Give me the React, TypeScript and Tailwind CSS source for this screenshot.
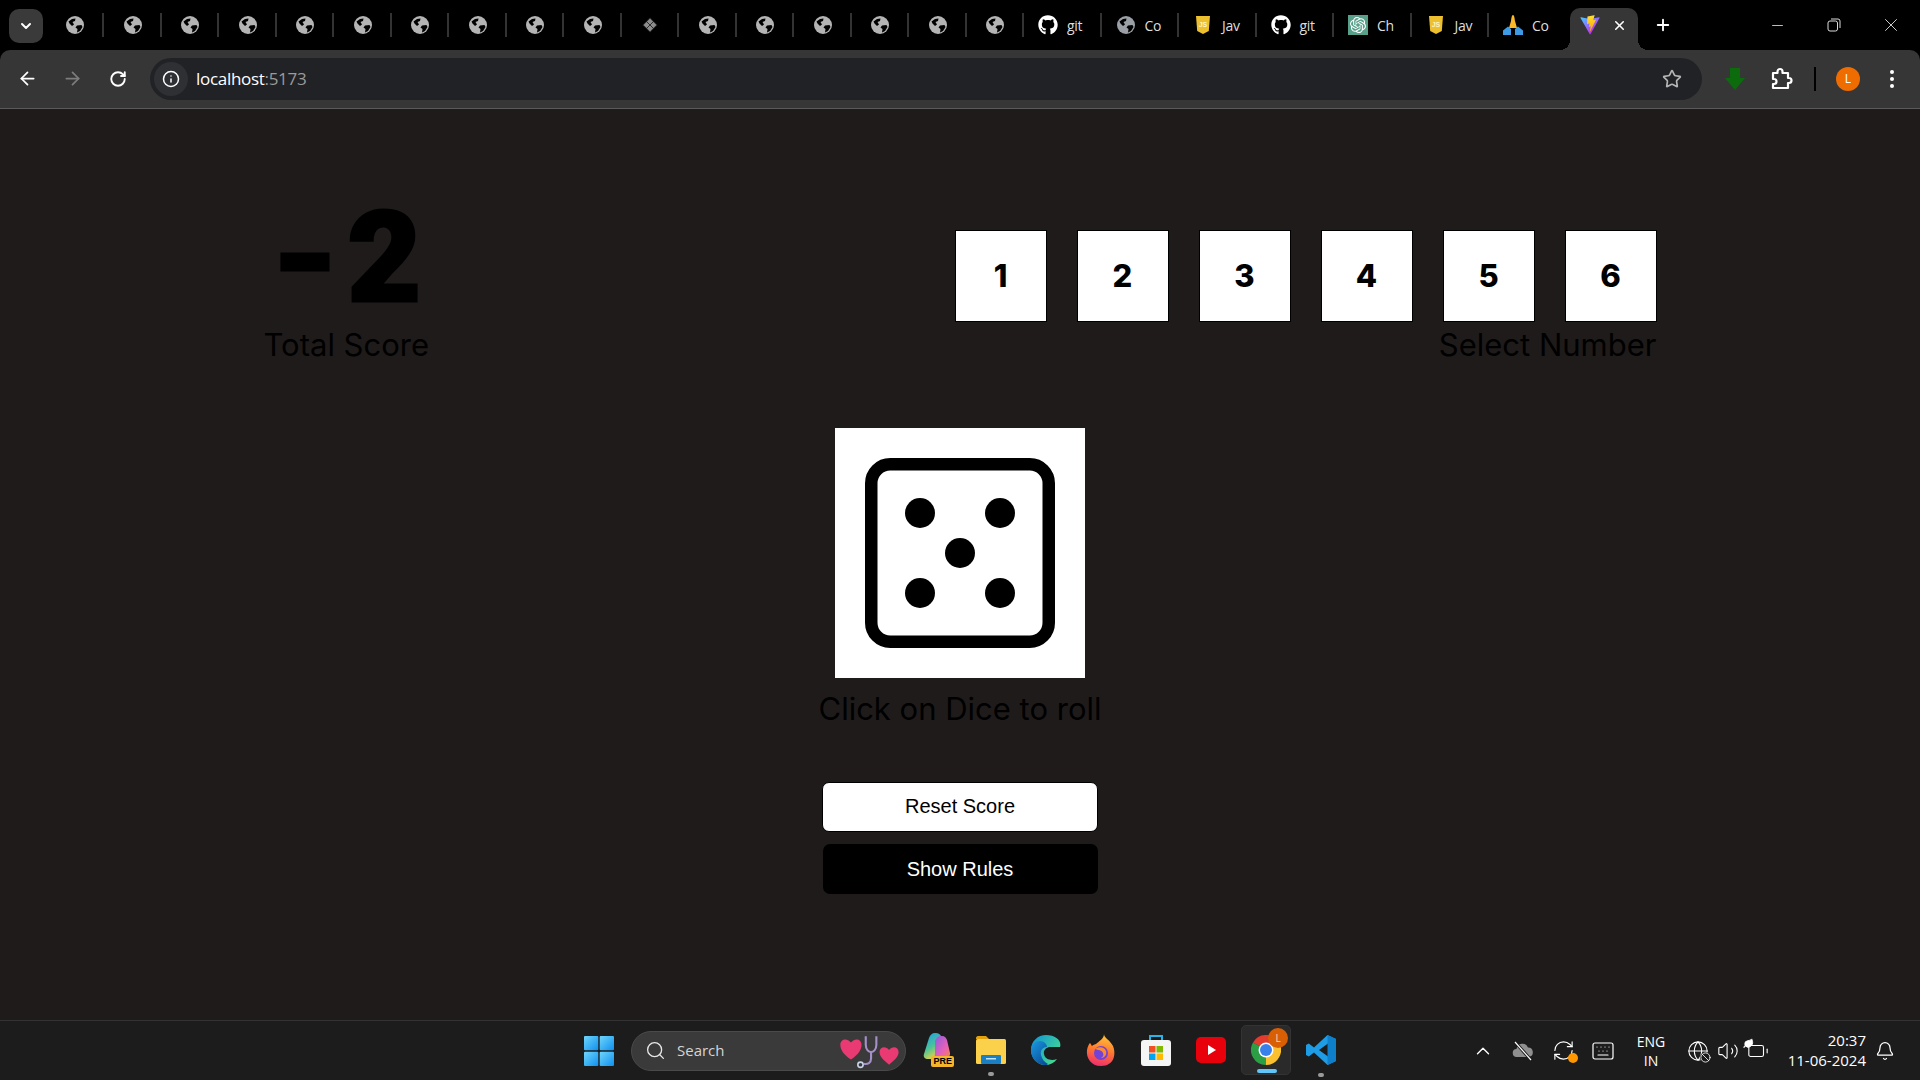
import React from "react";
import { ArrowLeft, ArrowRight, RotateCw, Info, Star, ChevronDown, X, Plus, Minus, ChevronUp, RefreshCw, Keyboard, Globe, Volume2, Bell, Search, Battery, Leaf, Ban } from "lucide-react";
import { FaGithub } from "react-icons/fa";
import { SiOpenai } from "react-icons/si";

const GlobeFav = ({ color = "#b4b4b4" }: { color?: string }) => (
  <svg width="18" height="18" viewBox="0 0 18 18">
    <circle cx="9" cy="9" r="9" fill={color} />
    <path d="M2.500 5.500 6 3l3.500-.5-.5 2.500-2.500 1L8 8.500 6 10 3.500 7.500z M11 9.500l4.500-.5 1 2-2.500 4-3 1.500.5-3.500-2-1.500z" fill="#000" />
  </svg>
);

const Diamond = () => (
  <svg width="16" height="16" viewBox="0 0 14 14">
    <rect x="2.500" y="2.500" width="9" height="9" transform="rotate(45 7 7)" fill="#8d8d8d" />
    <path d="M7 1 13 7M4 4l6 6M1 7l6 6M7 1 1 7M10 4l-6 6M13 7l-6 6" stroke="#000" strokeWidth="0.600" />
  </svg>
);

const JsFav = () => (
  <svg width="14" height="18" viewBox="0 0 14 18">
    <path d="M0 0h14l-1.200 15L7 18l-5.800-3z" fill="#ecc02e" />
    <text x="7" y="11" textAnchor="middle" fontSize="7" fontWeight="700" fontFamily="Liberation Sans" fill="#fff4c0">JS</text>
  </svg>
);

const ChatFav = () => (
  <span className="flex h-[20px] w-[20px] items-center justify-center bg-[#58a08a]">
    <SiOpenai size={16} color="#ffffff" />
  </span>
);

const PrayFav = () => (
  <svg width="20" height="20" viewBox="0 0 20 20">
    <path d="M10 0c1.200 0 1.600 3 2 6l2 7H6l2-7c.4-3 .8-6 2-6z" fill="#fbb829" />
    <path d="M0 20v-4.500L5 11.500 8 14v6zM20 20v-4.500L15 11.500 12 14v6z" fill="#3d9be5" />
  </svg>
);

const Vite = () => (
  <svg width="20" height="20" viewBox="0 0 410 404">
    <defs>
      <linearGradient id="va" x1="6" y1="33" x2="235" y2="344" gradientUnits="userSpaceOnUse">
        <stop stopColor="#41D1FF" />
        <stop offset="1" stopColor="#BD34FE" />
      </linearGradient>
      <linearGradient id="vb" x1="194" y1="8" x2="236" y2="293" gradientUnits="userSpaceOnUse">
        <stop stopColor="#FFEA83" />
        <stop offset="0.08" stopColor="#FFDD35" />
        <stop offset="1" stopColor="#FFA800" />
      </linearGradient>
    </defs>
    <path d="M399.641 59.5246L215.643 388.545C211.844 395.338 202.084 395.378 198.228 388.618L10.5817 59.5563C6.38087 52.1896 12.6802 43.2665 21.0281 44.7586L205.223 77.6824C206.398 77.8924 207.601 77.8904 208.776 77.6763L389.119 44.8058C397.439 43.2894 403.768 52.1434 399.641 59.5246Z" fill="url(#va)" />
    <path d="M292.965 1.5744L156.801 28.2552C154.563 28.6937 152.906 30.5903 152.771 32.8664L144.395 174.33C144.198 177.662 147.258 180.248 150.51 179.498L188.42 170.749C191.967 169.931 195.172 173.055 194.443 176.622L183.18 231.775C182.422 235.487 185.907 238.661 189.532 237.56L212.947 230.446C216.577 229.344 220.065 232.527 219.297 236.242L201.398 322.875C200.278 328.294 207.486 331.249 210.492 326.603L212.5 323.5L323.454 102.072C325.312 98.3645 322.108 94.137 318.036 94.9228L279.014 102.454C275.347 103.161 272.227 99.746 273.262 96.1583L298.731 7.86689C299.767 4.27314 296.636 0.855181 292.965 1.5744Z" fill="url(#vb)" />
  </svg>
);

const smallTabs = Array.from({ length: 17 }, (_, i) => i);

const wideTabs: { icon: React.ReactNode; label: string }[] = [
  { icon: <FaGithub size={20} color="#ffffff" />, label: "git" },
  { icon: <GlobeFav color="#9aa0a6" />, label: "Co" },
  { icon: <JsFav />, label: "Jav" },
  { icon: <FaGithub size={20} color="#ffffff" />, label: "git" },
  { icon: <ChatFav />, label: "Ch" },
  { icon: <JsFav />, label: "Jav" },
  { icon: <PrayFav />, label: "Co" },
];

const TabStrip = () => (
  <div className="relative flex h-[50px] items-center bg-black">
    <div className="absolute left-[9px] top-[9px] flex h-[34px] w-[34px] items-center justify-center rounded-[10px] bg-[#3a3a3a]">
      <ChevronDown size={16} color="#ffffff" strokeWidth={3} />
    </div>
    <div className="flex h-full items-center pl-[46.500px]">
      {smallTabs.map((i) => (
        <div key={i} className="flex h-[24px] w-[57.500px] items-center border-r-2 border-[#333333] pl-[2px]">
          <div className="flex w-full items-center justify-center">{i === 10 ? <Diamond /> : <GlobeFav />}</div>
        </div>
      ))}
      {wideTabs.map((t, i) => (
        <div key={i} className={`flex h-[24px] w-[77.500px] items-center pl-[14px] ${i < 6 ? "border-r-2 border-[#333333]" : ""}`}>
          <span className="flex w-[20px] shrink-0 justify-center">{t.icon}</span>
          <span className="ml-[9px] whitespace-nowrap font-['Open_Sans',sans-serif] text-[14px] tracking-[-0.3px] text-[#dedede]">{t.label}</span>
        </div>
      ))}
    </div>
    <div className="relative ml-[3.500px] mt-[8px] flex h-[42px] w-[68px] items-center rounded-t-[10px] bg-[#363636] pb-[8px] pl-[10px]">
      <span className="absolute bottom-0 left-[-10px] h-[10px] w-[10px] bg-[radial-gradient(circle_at_0_0,transparent_10px,#363636_10px)]" />
      <span className="absolute bottom-0 right-[-10px] h-[10px] w-[10px] bg-[radial-gradient(circle_at_100%_0,transparent_10px,#363636_10px)]" />
      <Vite />
      <X size={15} color="#ffffff" strokeWidth={2.500} className="ml-[12px]" />
    </div>
    <Plus size={18} color="#ffffff" strokeWidth={2.500} className="ml-[16px]" />
    <div className="ml-auto flex items-center pr-[1px]">
      <span className="flex w-[56px] justify-center"><Minus size={17} color="#dddddd" strokeWidth={1.200} /></span>
      <span className="flex w-[58px] justify-center">
        <svg width="14" height="14" viewBox="0 0 14 14" fill="none" stroke="#dddddd" strokeWidth="1">
          <rect x="1" y="3" width="9.500" height="10" rx="2" />
          <path d="M4 1h7a2 2 0 0 1 2 2v7" />
        </svg>
      </span>
      <span className="flex w-[56px] justify-center"><X size={22} color="#dddddd" strokeWidth={1} /></span>
    </div>
  </div>
);

const PuzzleIcon = () => (
  <svg width="24" height="24" viewBox="0 0 24 24" fill="none" stroke="#ffffff" strokeWidth="2.200" strokeLinejoin="round">
    <path d="M4 6h4.500V4.500a2.500 2.500 0 0 1 5 0V6H19v5h1a2.500 2.500 0 0 1 0 5h-1v5H4v-4h1a2.500 2.500 0 0 0 0-5H4z" />
  </svg>
);

const Toolbar = () => (
  <div className="flex h-[59px] items-center rounded-t-[10px] border-b border-[#5a5a5a] bg-[#363636] pb-[1px]">
    <span className="flex w-[54px] justify-center"><ArrowLeft size={21} color="#ffffff" strokeWidth={2} /></span>
    <span className="-ml-[4px] flex w-[45px] justify-center"><ArrowRight size={21} color="#7d7d7d" strokeWidth={2} /></span>
    <span className="flex w-[46px] justify-center"><RotateCw size={18} color="#ffffff" strokeWidth={2.500} /></span>
    <div className="ml-[9px] flex h-[42px] w-[1552px] items-center rounded-[21px] bg-[#212226] pl-[4px] pr-[20px]">
      <span className="flex h-[34px] w-[34px] items-center justify-center rounded-full bg-[#2f3034]">
        <Info size={18} color="#ffffff" strokeWidth={2} />
      </span>
      <span className="ml-[8px] font-['Open_Sans',sans-serif] text-[17px] tracking-[-0.3px] text-white">
        localhost<span className="text-[#9a9a9a]">:5173</span>
      </span>
      <Star size={20} color="#b5b5b5" strokeWidth={2} className="ml-auto" />
    </div>
    <span className="ml-[15px] flex w-[36px] justify-center">
      <svg width="20" height="22" viewBox="0 0 20 22"><path d="M5 0h10v10h5L10 22 0 10h5z" fill="#0c6b0c" /></svg>
    </span>
    <span className="ml-[10px] flex w-[36px] justify-center"><PuzzleIcon /></span>
    <span className="ml-[15px] h-[24px] w-[2px] bg-black" />
    <span className="ml-[20px] flex h-[24px] w-[24px] items-center justify-center rounded-full bg-[#ee6c00] font-['Open_Sans',sans-serif] text-[12px] text-white">L</span>
    <span className="ml-[30px] flex flex-col gap-[3px]">
      <i className="h-[4px] w-[4px] rounded-full bg-white" />
      <i className="h-[4px] w-[4px] rounded-full bg-white" />
      <i className="h-[4px] w-[4px] rounded-full bg-white" />
    </span>
  </div>
);

const DiceFace = () => (
  <svg width="250" height="250" viewBox="0 0 250 250" className="block">
    <rect x="36.250" y="36.250" width="177.500" height="177.500" rx="19" fill="none" stroke="#000" strokeWidth="12.500" />
    <circle cx="85" cy="85" r="15" fill="#000" />
    <circle cx="165" cy="85" r="15" fill="#000" />
    <circle cx="125" cy="125" r="15" fill="#000" />
    <circle cx="85" cy="165" r="15" fill="#000" />
    <circle cx="165" cy="165" r="15" fill="#000" />
  </svg>
);

const Game = () => (
  <main className="flex flex-1 flex-col items-center bg-[#1f1b1b] pt-[86px] font-['Inter',sans-serif] text-black">
    <div className="flex w-[1393px] items-end justify-between">
      <div className="flex flex-col items-center">
        <div className="whitespace-nowrap pl-[6px] font-['Roboto',sans-serif] text-[127px] font-black leading-[125px] [-webkit-text-stroke-width:3px]">
          <span className="mr-[13px] inline-block origin-center scale-x-[1.22]">-</span>2
        </div>
        <div className="mt-[2px] text-[31px] leading-[45px]">Total Score</div>
      </div>
      <div className="flex flex-col items-end">
        <div className="flex gap-[30px]">
          {[1, 2, 3, 4, 5, 6].map((n) => (
            <div key={n} className="flex h-[92px] w-[92px] items-center justify-center border border-black bg-white text-[31px] font-extrabold">{n}</div>
          ))}
        </div>
        <div className="text-[31px] leading-[45px]">Select Number</div>
      </div>
    </div>
    <div className="mt-[61px] bg-white"><DiceFace /></div>
    <div className="mt-[8px] text-[31px] leading-[45px]">Click on Dice to roll</div>
    <button className="mt-[51px] h-[50px] w-[276px] rounded-[7px] border border-black bg-white pb-[2px] font-['Liberation_Sans',sans-serif] text-[20px] text-black">Reset Score</button>
    <button className="mt-[12px] h-[50px] w-[275px] rounded-[7px] bg-black font-['Liberation_Sans',sans-serif] text-[20px] text-white">Show Rules</button>
  </main>
);

const WinLogo = () => (
  <svg width="30" height="30" viewBox="0 0 30 30">
    <defs>
      <linearGradient id="wl" x1="0" y1="0" x2="1" y2="1">
        <stop stopColor="#6fd6fb" />
        <stop offset="1" stopColor="#0f8ff0" />
      </linearGradient>
    </defs>
    <rect x="0" y="0" width="14.300" height="14.300" rx="1" fill="url(#wl)" />
    <rect x="15.700" y="0" width="14.300" height="14.300" rx="1" fill="url(#wl)" />
    <rect x="0" y="15.700" width="14.300" height="14.300" rx="1" fill="url(#wl)" />
    <rect x="15.700" y="15.700" width="14.300" height="14.300" rx="1" fill="url(#wl)" />
  </svg>
);

const Hearts = () => (
  <svg width="60" height="36" viewBox="0 0 56 34">
    <path d="M10 25C3 20 0 16 0 11c0-5 6-7 10-2 4-5 10-3 10 2 0 5-3 9-10 14z" fill="#ea3a73" />
    <path d="M46 30c-6-5-9-8-9-12 0-5 6-6 9-2 3-4 9-3 9 2 0 4-3 7-9 12z" fill="#ea3a73" />
    <path d="M24 3v8c0 5 3 7 5 7s5-2 5-7V3" fill="none" stroke="#a590c8" strokeWidth="2" />
    <path d="M29 18v6c0 4-3 6-7 5" fill="none" stroke="#a590c8" strokeWidth="2" />
    <circle cx="19" cy="30" r="2.500" fill="none" stroke="#c9d4e8" strokeWidth="1.500" />
  </svg>
);

const Copilot = () => (
  <span className="relative flex h-[34px] w-[34px] items-center justify-center">
    <svg width="28" height="26" viewBox="0 0 28 26" className="-mt-[8px]">
      <defs>
        <linearGradient id="c1" x1="0" y1="0" x2="0.400" y2="1"><stop stopColor="#1f9be8" /><stop offset="0.600" stopColor="#49c39a" /><stop offset="1" stopColor="#d8d24a" /></linearGradient>
        <linearGradient id="c2" x1="0" y1="0" x2="1" y2="1"><stop stopColor="#8a5de0" /><stop offset="0.600" stopColor="#e860b8" /><stop offset="1" stopColor="#f08a3e" /></linearGradient>
      </defs>
      <path d="M19 3c-1-2-3-3-5-3h-1c-3 0-5 2-6 5L2 21c-1 3 1 5 4 5h5c2 0 4-2 5-4z" fill="url(#c1)" />
      <path d="M13 8c1-3 3-5 6-5h1c3 0 4 2 5 4l3 13c.5 3-2 6-5 6h-7c-3 0-4-2-3-5z" fill="url(#c2)" />
    </svg>
    <span className="absolute bottom-0 right-[-1px] rounded-[2px] bg-[#f2b52b] px-[2px] font-['Liberation_Sans',sans-serif] text-[9px] font-bold leading-[11px] text-black">PRE</span>
  </span>
);

const Folder = () => (
  <svg width="30" height="28" viewBox="0 0 30 28">
    <path d="M0 2c0-1 1-2 2-2h8l3 3h-13z" fill="#e3a20b" />
    <rect x="0" y="3" width="30" height="25" rx="1.500" fill="#fbd04b" />
    <rect x="5" y="19" width="20" height="9" rx="1" fill="#1b7fc4" />
    <rect x="10" y="22" width="10" height="1.500" fill="#bfe3fb" />
  </svg>
);

const Edge = () => (
  <svg width="30" height="30" viewBox="0 0 30 30">
    <defs>
      <linearGradient id="e1" x1="0" y1="0" x2="1" y2="0.700"><stop stopColor="#1090d8" /><stop offset="1" stopColor="#45dc90" /></linearGradient>
      <linearGradient id="e2" x1="0" y1="0" x2="0.800" y2="1"><stop stopColor="#1a9ae0" /><stop offset="1" stopColor="#0a4c9a" /></linearGradient>
    </defs>
    <path d="M15 0C7 0 0 6 0 15c0 8 6 15 14 15 5 0 9-2 12-6-5 2-12 1-13-5-1-4 3-7 6-7h10c2-6-4-12-14-12z" fill="url(#e1)" />
    <path d="M0 15c0-6 5-9 9-9 4 0 7 3 7 6-4 0-7 3-6 8 1 4 3 7 7 9-1 1-2 1-3 1C6 30 0 23 0 15z" fill="url(#e2)" />
  </svg>
);

const Firefox = () => (
  <svg width="30" height="32" viewBox="0 0 30 32">
    <defs>
      <linearGradient id="f1" x1="0.600" y1="0" x2="0.400" y2="1"><stop stopColor="#ffc83d" /><stop offset="0.500" stopColor="#ff7a2e" /><stop offset="1" stopColor="#ef2d6e" /></linearGradient>
    </defs>
    <path d="M18 0c0 4 6 6 9 12 3 7 2 20-12 20C5 32 0 24 1 16c.5-3 2-6 3-7 1 1 1 2 2 3 1-1 3-2 4-2 3-3 8-5 8-10z" fill="url(#f1)" />
    <circle cx="15" cy="19" r="7" fill="#7342d6" />
    <path d="M9 15c4-3 10-2 11 2 1 3-1 7-5 7 2-1 3-3 2-5-1-3-5-3-8-4z" fill="#ff8a2e" />
  </svg>
);

const Store = () => (
  <svg width="30" height="32" viewBox="0 0 30 32">
    <path d="M9 6V2h12v4" fill="none" stroke="#28b4e8" strokeWidth="2" />
    <rect x="0" y="6" width="30" height="26" rx="3" fill="#f5f5f5" />
    <rect x="8" y="12" width="6.500" height="6.500" fill="#f25022" />
    <rect x="15.500" y="12" width="6.500" height="6.500" fill="#7fba00" />
    <rect x="8" y="19.500" width="6.500" height="6.500" fill="#00a4ef" />
    <rect x="15.500" y="19.500" width="6.500" height="6.500" fill="#ffb900" />
  </svg>
);

const Youtube = () => (
  <svg width="30" height="30" viewBox="0 0 30 30">
    <rect x="0" y="2" width="30" height="26" rx="5" fill="#e8000b" />
    <path d="M12 10l8 5-8 5z" fill="#ffffff" />
  </svg>
);

const Chrome = () => (
  <span className="relative flex h-[30px] w-[30px]">
    <svg width="30" height="30" viewBox="0 0 30 30">
      <path d="M15 15 2 7.500A15 15 0 0 1 28 7.500z" fill="#e33b2e" />
      <path d="M15 15 28 7.500A15 15 0 0 1 15 30z" fill="#fbc02d" />
      <path d="M15 15 15 30A15 15 0 0 1 2 7.500z" fill="#2c9f45" />
      <circle cx="15" cy="15" r="7.500" fill="#ffffff" />
      <circle cx="15" cy="15" r="6" fill="#3a80ea" />
    </svg>
    <span className="absolute -right-[7px] -top-[7px] flex h-[20px] w-[20px] items-center justify-center rounded-full bg-[#d95f05] font-['Open_Sans',sans-serif] text-[10px] text-[#ffd7b0]">L</span>
  </span>
);

const VSCode = () => (
  <svg width="30" height="30" viewBox="0 0 30 30">
    <path d="M21.500 0 30 4v22l-8.500 4L8 17.500 2.800 21.500 0 20v-10l2.800-1.500L8 12.500zM22 8.500 13 15l9 6.500z" fill="#1f9ce6" />
    <path d="M21.500 0 30 4v22l-8.500 4z" fill="#0d7fcb" />
  </svg>
);

const CloudSlash = () => (
  <svg width="22" height="20" viewBox="0 0 22 20">
    <path d="M5 16a4 4 0 0 1-.5-8A6 6 0 0 1 16 6.500 4.800 4.800 0 0 1 17 16z" fill="#8f8f8f" />
    <path d="M3 1l16 18" stroke="#1c1c1c" strokeWidth="3" />
    <path d="M3 1l16 18" stroke="#ffffff" strokeWidth="1.200" />
  </svg>
);

const Slot = ({ children }: { children: React.ReactNode }) => (
  <span className="flex h-[58px] w-[55px] items-center justify-center pb-[1px]">{children}</span>
);

const Taskbar = () => (
  <div className="flex h-[60px] items-center border-t border-[#333333] bg-[#1c1c1c] pl-[584px] pr-[16px] font-['Open_Sans',sans-serif] text-white">
    <WinLogo />
    <div className="ml-[17px] flex h-[40px] w-[275px] items-center rounded-full border border-[#4a4a4a] bg-[#3a3a3a] pl-[13px] pr-[5px]">
      <Search size={21} color="#e8e8e8" strokeWidth={1.500} />
      <span className="ml-[11px] text-[15px] text-[#d4d4d4]">Search</span>
      <span className="ml-auto flex"><Hearts /></span>
    </div>
    <div className="ml-[2.500px] flex items-center">
      <Slot><Copilot /></Slot>
      <Slot>
        <span className="relative flex"><Folder /><i className="absolute -bottom-[12px] left-[12px] h-[4px] w-[6px] rounded-full bg-[#9a9a9a]" /></span>
      </Slot>
      <Slot><Edge /></Slot>
      <Slot><Firefox /></Slot>
      <Slot><Store /></Slot>
      <Slot><Youtube /></Slot>
      <Slot>
        <span className="relative flex h-[50px] w-[50px] items-center justify-center rounded-[5px] border border-[#333333] bg-[#2a2a2a]">
          <Chrome />
          <i className="absolute bottom-[1px] left-[15px] h-[4px] w-[20px] rounded-full bg-[#60c5f8]" />
        </span>
      </Slot>
      <Slot>
        <span className="relative flex"><VSCode /><i className="absolute -bottom-[12px] left-[12px] h-[4px] w-[6px] rounded-full bg-[#9a9a9a]" /></span>
      </Slot>
    </div>
    <div className="ml-auto flex items-center">
      <span className="flex w-[40px] justify-center"><ChevronUp size={22} color="#ffffff" strokeWidth={1.500} /></span>
      <span className="flex w-[40px] justify-center"><CloudSlash /></span>
      <span className="relative flex w-[40px] justify-center">
        <RefreshCw size={23} color="#ffffff" strokeWidth={1.200} />
        <i className="absolute bottom-[-1px] right-[5px] h-[10px] w-[10px] rounded-full bg-[#ff9800]" />
      </span>
      <span className="flex w-[40px] justify-center"><Keyboard size={24} color="#ffffff" strokeWidth={1.200} /></span>
      <div className="mr-[4px] flex w-[56px] flex-col items-center text-[14px] leading-[19px]"><span>ENG</span><span>IN</span></div>
      <span className="relative flex w-[30px] justify-center">
        <Globe size={22} color="#ffffff" strokeWidth={1.200} />
        <span className="absolute bottom-[-1px] right-[2px] rounded-full bg-[#1c1c1c]"><Ban size={11} color="#ffffff" strokeWidth={1.800} /></span>
      </span>
      <span className="flex w-[30px] justify-center"><Volume2 size={22} color="#ffffff" strokeWidth={1.200} /></span>
      <span className="relative flex w-[30px] justify-center">
        <Battery size={22} color="#ffffff" strokeWidth={1.200} />
        <span className="absolute left-0 -top-[2px]"><Leaf size={11} color="#ffffff" fill="#ffffff" /></span>
      </span>
      <div className="-mt-[2px] flex w-[93px] flex-col items-end text-[15px] leading-[20px]"><span>20:37</span><span>11-06-2024</span></div>
      <span className="flex w-[38px] justify-center"><Bell size={20} color="#ffffff" strokeWidth={1.500} /></span>
    </div>
  </div>
);

export default function App() {
  return (
    <div className="flex h-screen w-full flex-col overflow-hidden bg-black">
      <TabStrip />
      <Toolbar />
      <Game />
      <Taskbar />
    </div>
  );
}
